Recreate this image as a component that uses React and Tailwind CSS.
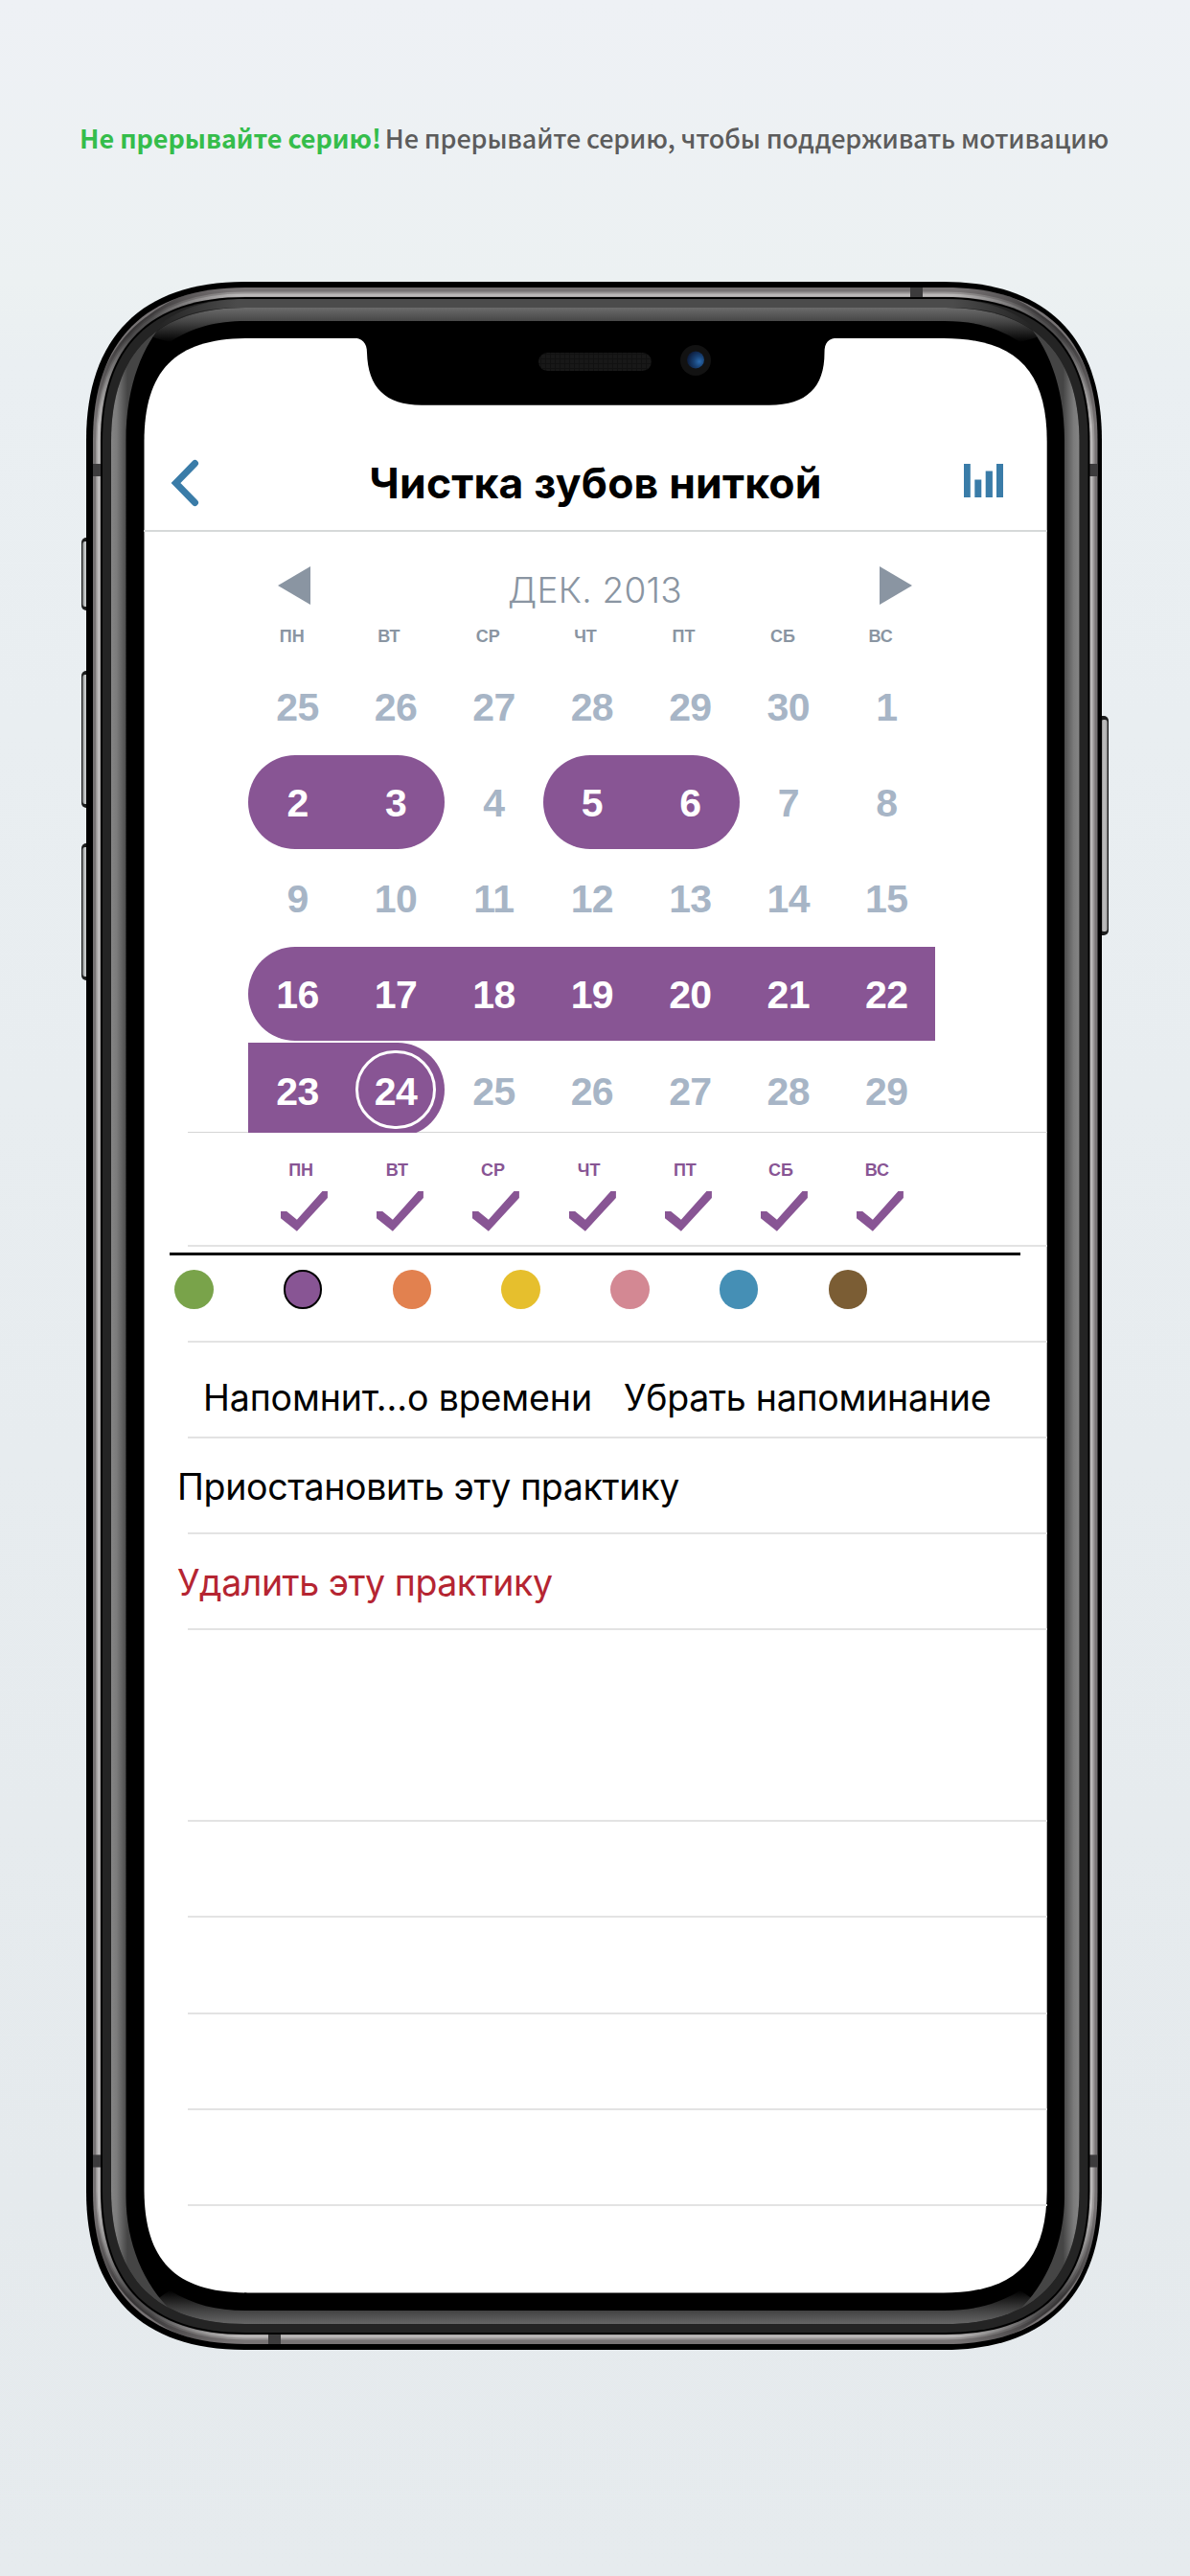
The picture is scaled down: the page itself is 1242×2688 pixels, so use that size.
import React from "react";

const PURPLE = "#885594";

// Rounded rectangle whose corners ease in gradually: `l` is the corner's reach, `a` its tightness.
function body(x0, y0, x1, y1, l, a) {
  return `M${x0 + l} ${y0}H${x1 - l}C${x1 - a} ${y0} ${x1} ${y0 + a} ${x1} ${y0 + l}V${y1 - l}C${x1} ${y1 - a} ${x1 - a} ${y1} ${x1 - l} ${y1}H${x0 + l}C${x0 + a} ${y1} ${x0} ${y1 - a} ${x0} ${y1 - l}V${y0 + l}C${x0} ${y0 + a} ${x0 + a} ${y0} ${x0 + l} ${y0}Z`;
}

const CORNER = "M101 459C101 396 130 356 156 337C180 318 208 305 255 305";

function SideButton({ x, y, h, right }) {
  return (
    <g>
      <rect x={x} y={y} width="12" height={h} rx="5" fill="#1c1d1d" />
      <rect x={right ? x + 4 : x + 1} y={y + 4} width="7" height={h - 8} rx="3" fill={right ? "url(#btnR)" : "url(#btnL)"} />
    </g>
  );
}

function PhoneFrame() {
  return (
    <svg className="absolute left-0 top-0" width="1242" height="2688" viewBox="0 0 1242 2688">
      <defs>
        <linearGradient id="btnL"><stop offset="0" stopColor="#6d7070" /><stop offset=".4" stopColor="#d0d3d4" /><stop offset=".7" stopColor="#b0b3b3" /><stop offset="1" stopColor="#4a4b4b" /></linearGradient>
        <linearGradient id="btnR"><stop offset="0" stopColor="#777" /><stop offset=".4" stopColor="#c0c0c0" /><stop offset=".8" stopColor="#b0b0b0" /><stop offset="1" stopColor="#555" /></linearGradient>
        <linearGradient id="left" gradientUnits="userSpaceOnUse" x1="116" x2="133" y1="0" y2="0"><stop offset="0" stopColor="#858585" /><stop offset=".35" stopColor="#7b7b7b" /><stop offset="1" stopColor="#454545" /></linearGradient>
        <linearGradient id="right" gradientUnits="userSpaceOnUse" x1="1109.500" x2="1126.500" y1="0" y2="0"><stop offset="0" stopColor="#454545" /><stop offset=".65" stopColor="#7b7b7b" /><stop offset="1" stopColor="#858585" /></linearGradient>
        <linearGradient id="top" gradientUnits="userSpaceOnUse" x1="0" x2="0" y1="321" y2="357"><stop offset="0" stopColor="#6b6b6b" /><stop offset=".39" stopColor="#474747" /><stop offset="1" stopColor="#000" /></linearGradient>
        <linearGradient id="bottom" gradientUnits="userSpaceOnUse" x1="0" x2="0" y1="2425" y2="2390"><stop offset="0" stopColor="#666" /><stop offset=".4" stopColor="#424242" /><stop offset="1" stopColor="#000" /></linearGradient>
        <linearGradient id="edge" gradientUnits="userSpaceOnUse" x1="165" x2="1077" y1="0" y2="0"><stop offset="0" stopColor="#4b4b4b" stopOpacity="0" /><stop offset=".09" stopColor="#4b4b4b" /><stop offset=".91" stopColor="#4b4b4b" /><stop offset="1" stopColor="#4b4b4b" stopOpacity="0" /></linearGradient>
        <linearGradient id="shade" gradientUnits="userSpaceOnUse" x1="98" y1="440" x2="240" y2="300"><stop offset="0" stopColor="#1b1a1b" stopOpacity="0" /><stop offset=".45" stopColor="#1b1a1b" stopOpacity=".7" /><stop offset=".6" stopColor="#1b1a1b" stopOpacity=".65" /><stop offset="1" stopColor="#1b1a1b" stopOpacity="0" /></linearGradient>
        <radialGradient id="lens" cx=".72" cy=".6" r=".75"><stop offset="0" stopColor="#2a6aae" /><stop offset=".4" stopColor="#194478" /><stop offset="1" stopColor="#0b1836" /></radialGradient>
        <pattern id="mesh" width="5" height="5" patternUnits="userSpaceOnUse"><rect width="5" height="5" fill="#111" /><rect width="4" height="4" fill="#181818" /></pattern>
        <clipPath id="bezel"><path d={body(116, 321, 1126.5, 2425, 140, 47)} /></clipPath>
        <clipPath id="rim"><path d={body(97, 300, 1145.5, 2446, 159, 55)} /></clipPath>
      </defs>

      <SideButton x={85} y={561} h={76} />
      <SideButton x={85} y={700} h={143} />
      <SideButton x={85} y={880} h={143} />
      <SideButton x={1145} y={747} h={229} right />

      <path d={body(90, 294, 1150, 2452, 165, 58)} fill="#000" />
      <path d={body(97, 300, 1145.5, 2446, 159, 55)} fill="#777374" />
      <g clipPath="url(#rim)">
        <path d={body(103, 307.5, 1139.5, 2438.5, 153, 53)} fill="none" stroke="#989595" strokeWidth="6" />
        <path d={body(103, 308, 1139, 2438, 153, 53)} fill="none" stroke="#bab8b8" strokeWidth="3" />
        <g fill="none" stroke="url(#shade)" strokeWidth="14">
          <path d={CORNER} />
          <path d={CORNER} transform="translate(1242.5 0) scale(-1 1)" />
          <path d={CORNER} transform="translate(0 2746) scale(1 -1)" />
          <path d={CORNER} transform="translate(1242.5 2746) scale(-1 -1)" />
        </g>
      </g>
      <g fill="#3c3b3c">
        <path d="M97 484h8v13h-8zM97 2248.500h8v13h-8zM1137 484h8v13h-8zM1137 2248.500h8v13h-8zM950 300h13v10h-13zM280 2436h13v10h-13z" />
      </g>
      <path d={body(105, 310, 1137.5, 2436, 151, 51)} fill="#000" />
      <path d={body(107, 312, 1135.5, 2434, 149, 50)} fill="#242424" />
      <path d="M165 340C190 320 220 312 256 312H986C1022 312 1052 320 1077 340V345C1052 325 1022 321 986 321H256C220 321 190 325 165 345Z" fill="url(#edge)" />

      <g clipPath="url(#bezel)">
        <rect x="110" y="315" width="1022" height="2116" fill="#000" />
        <path d="M160 315H1082V352L1065 357C1040 341 1016 335 986 335H256C226 335 202 341 177 357L160 352Z" fill="url(#top)" />
        <path d="M160 2431H1082V2402L1065 2390C1040 2405 1016 2411 986 2411H256C226 2411 202 2405 177 2390L160 2402Z" fill="url(#bottom)" />
        <path d="M110 335H172C150 360 131.500 400 131.500 460V2292C131.500 2340 150 2385 180 2412L110 2431Z" fill="url(#left)" />
        <path d="M1132 335H1070C1092 360 1111 400 1111 460V2292C1111 2340 1092 2385 1062 2412L1132 2431Z" fill="url(#right)" />
      </g>

      <path d={body(150.5, 353, 1092.7, 2392.4, 108, 33)} fill="#fff" />
      <path d="M368 352.500C378 352.500 383 358 383 368C384 404 402 422.700 440 422.700H803C842 422.700 860.500 404 860.500 368C860.500 358 864 352.500 876 352.500Z" fill="#000" />
      <rect x="562" y="368" width="118" height="19" rx="9.5" fill="url(#mesh)" />
      <circle cx="726" cy="376" r="16" fill="#121212" />
      <circle cx="726" cy="375.500" r="9" fill="url(#lens)" />
    </svg>
  );
}

const WEEKDAYS = ["ПН", "ВТ", "СР", "ЧТ", "ПТ", "СБ", "ВС"];

const WEEKS = [
  [[25], [26], [27], [28], [29], [30], [1]],
  [[2, "l"], [3, "r"], [4], [5, "l"], [6, "r"], [7], [8]],
  [[9], [10], [11], [12], [13], [14], [15]],
  [[16, "l"], [17, "m"], [18, "m"], [19, "m"], [20, "m"], [21, "m"], [22, "m"]],
  [[23, "m"], [24, "r", true], [25], [26], [27], [28], [29]],
];

const CELL = {
  l: "bg-[#885594] text-white rounded-l-full",
  r: "bg-[#885594] text-white rounded-r-full",
  m: "bg-[#885594] text-white",
};

const COLORS = ["bg-[#79a34a]", "bg-[#885594] border-2 border-black", "bg-[#e2814f]", "bg-[#e6bf2d]", "bg-[#d38893]", "bg-[#458fb5]", "bg-[#7b5d34]"];

function Divider() {
  return <div className="ml-[46px] h-[2px] shrink-0 bg-[#e3e3e3]" />;
}

function NavBar() {
  return (
    <div className="flex h-[202px] shrink-0 items-center border-b-2 border-[#d6d9d9] pl-[28px] pr-[46px] pt-[101px]">
      <svg width="30" height="50" viewBox="0 0 30 50" fill="none" className="shrink-0">
        <path d="M25.500 4.500L5.500 25L25.500 45.500" stroke="#3a7ca8" strokeWidth="7" strokeLinecap="round" strokeLinejoin="miter" />
      </svg>
      <h1 className="flex-1 pl-[29px] text-center font-['Inter'] text-[44.5px] font-bold leading-[60px] tracking-[0.18px] whitespace-nowrap text-black">Чистка зубов ниткой</h1>
      <svg width="41" height="35" viewBox="0 0 41 35" fill="#3a7ca8" className="-mt-[5px] shrink-0">
        <path d="M0 0h6.800v35h-6.800zM11.300 16.500h7v18.500h-7zM22.700 7.500h7.200v27.500h-7.200zM34 0h7v35h-7z" />
      </svg>
    </div>
  );
}

function Calendar() {
  return (
    <section className="relative z-10 h-[627px] shrink-0 overflow-hidden">
      <div className="ml-[109.300px] w-[717.200px]">
        <div className="flex h-[96px] items-start justify-between pl-[30.700px] pr-[24.500px] pt-[36px]">
          <svg width="34" height="40" viewBox="0 0 34 40"><path d="M34 0V40L0 20Z" fill="#8a95a2" /></svg>
          <div className="font-['Inter'] text-[37px] font-[350] leading-[50px] tracking-[0.25px] whitespace-nowrap text-[#8a95a2]">ДЕК. 2013</div>
          <svg width="34" height="40" viewBox="0 0 34 40"><path d="M0 0V40L34 20Z" fill="#8a95a2" /></svg>
        </div>
        <div className="grid h-[36.500px] grid-cols-7 font-['Liberation_Sans'] text-[18px] font-bold leading-[26px] text-[#8a95a2]">
          {WEEKDAYS.map((d) => <div key={d} className="pl-[32.500px]">{d}</div>)}
        </div>
        <div className="flex flex-col gap-[2.150px] font-['Liberation_Sans'] text-[41px] font-bold leading-none tracking-[-0.6px]">
          {WEEKS.map((week, i) => (
            <div key={i} className="grid h-[98px] grid-cols-7">
              {week.map(([day, shape, today]) => (
                <div key={day} className={`flex items-center justify-center ${shape ? CELL[shape] : "text-[#a7b5c6]"}`}>
                  <span className={`flex items-center justify-center pt-[4px] ${today ? "h-[82px] w-[84px] rounded-full border-[3px] border-white" : ""}`}>{day}</span>
                </div>
              ))}
            </div>
          ))}
        </div>
      </div>
    </section>
  );
}

function Repeats() {
  return (
    <section className="ml-[117.500px] grid h-[117px] w-[701.400px] shrink-0 grid-cols-7 pt-[26px]">
      {WEEKDAYS.map((d) => (
        <div key={d} className="flex flex-col items-center">
          <div className="pr-[7px] font-['Liberation_Sans'] text-[18px] font-bold leading-[26px] text-[#885594]">{d}</div>
          <svg width="49" height="42" viewBox="0 0 49 42" className="mt-[9px]">
            <path d="M0 21H6.200L16.900 29.700L43.400 0H48.900V7L16.900 41.700L0 28.300Z" fill={PURPLE} />
          </svg>
        </div>
      ))}
    </section>
  );
}

export default function App() {
  return (
    <div className="relative h-[2688px] w-[1242px] overflow-hidden bg-[linear-gradient(180deg,#eef1f5_0%,#ecf1f2_11%,#eaeff2_14%,#e5eaed_85%,#e6ebee_100%)]">
      <PhoneFrame />
      <div className="relative flex flex-col">
        <p className="flex h-[353px] items-start gap-[4px] pl-[83px] pt-[124px] font-['Noto_Sans_CJK_SC'] text-[27px] leading-[40px] whitespace-nowrap">
          <span className="font-bold tracking-[-0.04px] text-[#35bd4b]">Не прерывайте серию!</span>
          <span className="font-medium tracking-[-0.16px] text-[#5c5c5c]">Не прерывайте серию, чтобы поддерживать мотивацию</span>
        </p>
        <main className="ml-[150px] flex h-[2039px] w-[943px] flex-col overflow-hidden">
          <NavBar />
          <Calendar />
          <div className="-mt-px ml-[46px] h-px shrink-0 bg-[#d5d5d5]" />
          <Repeats />
          <Divider />
          <div className="flex h-[98px] shrink-0 flex-col pl-[27px] pt-[6px]">
            <div className="h-[3px] w-[888px] bg-black" />
            <div className="mt-[15px] flex gap-[73.300px] pl-[5px]">
              {COLORS.map((c) => <div key={c} className={`h-[41px] w-[40.500px] rounded-full ${c}`} />)}
            </div>
          </div>
          <Divider />
          <div className="flex h-[98px] shrink-0 gap-[33px] pl-[62px] pt-[28px] font-['Inter'] text-[37.5px] leading-[60px] whitespace-nowrap text-black">
            <span className="tracking-[-0.12px]">Напомнит...о времени</span>
            <span className="tracking-[-0.26px]">Убрать напоминание</span>
          </div>
          <Divider />
          <div className="h-[98px] shrink-0 pl-[35px] pt-[21px] font-['Inter'] text-[37.5px] leading-[60px] tracking-[-0.32px] text-black">Приостановить эту практику</div>
          <Divider />
          <div className="h-[98px] shrink-0 pl-[35px] pt-[21px] font-['Inter'] text-[37.5px] leading-[60px] tracking-[-0.46px] text-[#b52532]">Удалить эту практику</div>
          <Divider />
          <div className="h-[198px] shrink-0" />
          <Divider />
          {[0, 1, 2, 3].map((i) => (
            <React.Fragment key={i}>
              <div className="h-[98.300px] shrink-0" />
              <Divider />
            </React.Fragment>
          ))}
        </main>
      </div>
    </div>
  );
}
